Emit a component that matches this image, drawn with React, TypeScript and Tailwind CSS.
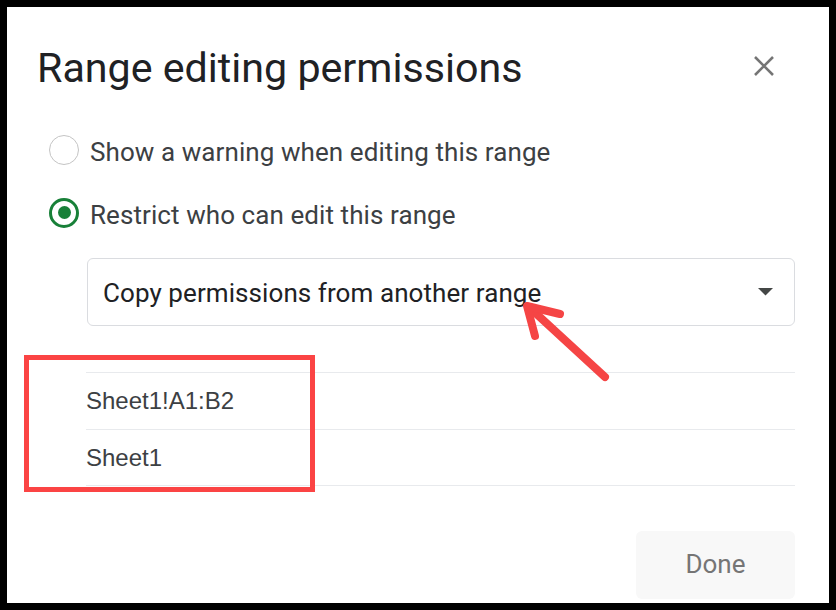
const roboto = { fontFamily: "Roboto, 'Noto Sans', sans-serif" };

function Radio({ checked }: { checked?: boolean }) {
  if (checked) {
    return (
      <div className="w-[30px] h-[30px] rounded-full border-[3px] border-[#188038] flex items-center justify-center shrink-0">
        <div className="w-[13px] h-[13px] rounded-full bg-[#188038]" />
      </div>
    );
  }
  return <div className="w-[30px] h-[30px] rounded-full border-[1.5px] border-[#c4c4c4] shrink-0" />;
}

export default function App() {
  return (
    <div className="w-[836px] h-[610px] bg-black p-[7px]">
      <div className="relative w-full h-full bg-white flex flex-col" style={roboto}>
        <div className="flex items-start justify-between pl-[30px] pr-[54px] pt-[37px]">
          <h1 className="h-[48px] leading-[48px] text-[41.2px] text-[#202124]">
            Range editing permissions
          </h1>
          <svg className="mt-[11px]" width="22" height="22" viewBox="0 0 22 22">
            <path d="M2 2 L20 20 M20 2 L2 20" stroke="#757575" strokeWidth="2.6" fill="none" />
          </svg>
        </div>

        <div className="mt-[26px] pl-[42px] flex flex-col">
          <div className="h-[63px] flex items-center gap-[11px]">
            <Radio />
            <span className="text-[26px] leading-[32px] pt-[5px] tracking-[0.08px] text-[#3c4043]">
              Show a warning when editing this range
            </span>
          </div>
          <div className="h-[63px] flex items-center gap-[11px]">
            <Radio checked />
            <span className="text-[26px] leading-[32px] pt-[5px] tracking-[0.08px] text-[#3c4043]">
              Restrict who can edit this range
            </span>
          </div>
        </div>

        <div className="mt-[14px] ml-[80px] mr-[34px] h-[68px] rounded-[6px] border border-[#dadce0] flex items-center justify-between pl-[15px] pr-[21px]">
          <span className="text-[26px] leading-[32px] pt-[2px] tracking-[0.08px] text-[#202124]">
            Copy permissions from another range
          </span>
          <svg width="15" height="8" viewBox="0 0 15 8">
            <path d="M0 0 L15 0 L7.5 7.5 Z" fill="#444746" />
          </svg>
        </div>

        <div
          className="mt-[46px] ml-[79px] mr-[34px] border-t border-[#e8eaed]"
          style={{ fontFamily: "'Liberation Sans', Arial, sans-serif" }}
        >
          <div className="h-[57px] flex items-center border-b border-[#e8eaed] text-[24px] text-[#3c4043]">
            Sheet1!A1:B2
          </div>
          <div className="h-[56px] flex items-center border-b border-[#e8eaed] text-[24px] text-[#3c4043]">
            Sheet1
          </div>
        </div>

        <div className="mt-[45px] mr-[34px] flex justify-end">
          <button className="w-[159px] h-[68px] rounded-[6px] bg-[#f8f8f8] text-[26px] leading-[32px] pb-[3px] text-[#757575]">
            Done
          </button>
        </div>

        <div className="absolute left-[17px] top-[348px] w-[291px] h-[137px] border-[5px] border-[#fb4444]" />

        <svg className="absolute left-0 top-0" width="822" height="596" viewBox="0 0 822 596">
          <g stroke="#f54545" strokeWidth="8" strokeLinecap="round" strokeLinejoin="round" fill="none">
            <path d="M598 370 L523 301" />
            <path d="M553 307 L520 299 L528 329" />
          </g>
        </svg>
      </div>
    </div>
  );
}
